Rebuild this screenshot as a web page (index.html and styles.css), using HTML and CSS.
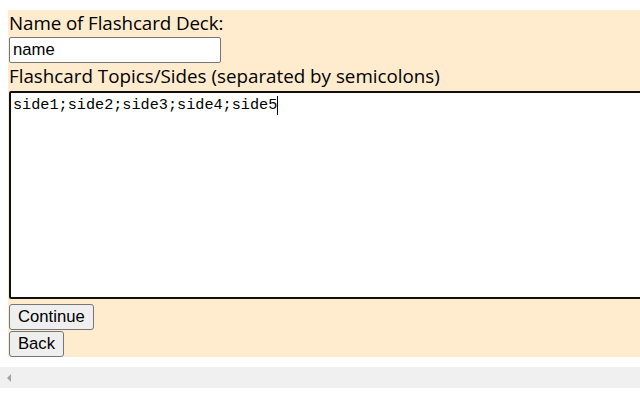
FILE: index.html
```html
<!DOCTYPE html>
<html>
<head>
<meta charset="utf-8">
<link rel="stylesheet" href="styles.css">
</head>
<body>
<div class="viewport">
  <div class="panel">
    <label class="label label-tight" for="deck">Name of Flashcard Deck:</label>
    <input class="name-input" id="deck" type="text" value="name">
    <label class="label" for="sides">Flashcard Topics/Sides (separated by semicolons)</label>
    <div class="textarea"><span>side1;side2;side3;side4;side5</span><span class="caret"></span></div>
    <button class="btn btn-first">Continue</button>
    <button class="btn">Back</button>
  </div>
</div>
<div class="scrollbar"><span class="arrow"></span></div>
</body>
</html>
```
FILE: styles.css
```css
html, body {
  margin: 0;
  padding: 0;
  background: #ffffff;
  overflow: hidden;
}
.viewport {
  width: 640px;
  height: 367px;
  box-sizing: border-box;
  padding: 10px 0 0 8px;
  overflow: hidden;
}
.panel {
  width: 1200px;
  height: 347px;
  box-sizing: border-box;
  background: #ffebcd;
  display: flex;
  flex-direction: column;
  align-items: flex-start;
  padding-left: 1px;
}
.label {
  font-family: "Open Sans", sans-serif;
  font-size: 18.8px;
  line-height: 27px;
  color: #000;
  height: 27px;
}
.label-tight {
  letter-spacing: -0.1px;
}
.name-input {
  width: 212px;
  height: 26px;
  box-sizing: border-box;
  border: 1px solid #767676;
  border-radius: 2px;
  padding: 0 3px;
  margin: 0;
  font-family: "Liberation Sans", Arial, sans-serif;
  font-size: 16.67px;
  color: #000;
  background: #fff;
}
.textarea {
  margin-top: 1px;
  width: 1000px;
  height: 208px;
  box-sizing: border-box;
  border: 2px solid #101010;
  border-radius: 2px;
  padding: 2px 2px;
  background: #fff;
  font-family: "Liberation Mono", monospace;
  font-size: 15.2px;
  line-height: 20px;
  color: #000;
  display: flex;
  align-items: flex-start;
}
.caret {
  display: inline-block;
  width: 1px;
  height: 19px;
  background: #000;
  margin-top: 1px;
}
.btn {
  font-family: "Liberation Sans", Arial, sans-serif;
  font-size: 16.67px;
  color: #000;
  background: #efefef;
  border: 1px solid #767676;
  border-radius: 3px;
  padding: 0 8px;
  height: 26px;
  line-height: 22px;
  margin: 0;
}
.btn-first {
  margin-top: 5px;
  margin-bottom: 1px;
}
.scrollbar {
  width: 640px;
  height: 21px;
  background: #f0f0f0;
  position: relative;
  box-shadow: 0 2px 2px rgba(0,0,0,0.25);
}
.arrow {
  position: absolute;
  left: 7px;
  top: 7px;
  width: 0;
  height: 0;
  border-top: 4px solid transparent;
  border-bottom: 4px solid transparent;
  border-right: 4px solid #a3a3a3;
}
```
